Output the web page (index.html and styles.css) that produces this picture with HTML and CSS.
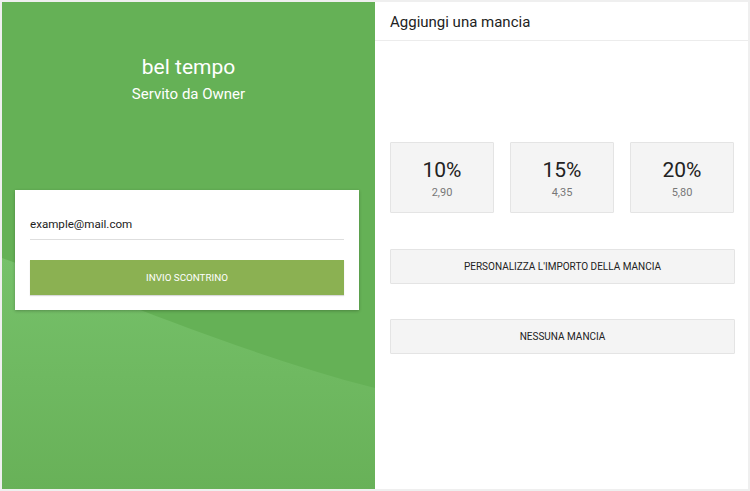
FILE: index.html
```html
<!DOCTYPE html>
<html>
<head>
<meta charset="utf-8">
<link rel="stylesheet" href="styles.css">
</head>
<body>
<div class="frame">
  <section class="left">
    <svg class="wave" viewBox="0 0 373 489" preserveAspectRatio="none" width="373" height="489">
      <defs>
        <linearGradient id="g" x1="0" y1="0" x2="0" y2="1">
          <stop offset="0" stop-color="#76c16a"/>
          <stop offset="1" stop-color="#68b158"/>
        </linearGradient>
      </defs>
      <path d="M0,256 C110,295 240,352 373,386 L373,489 L0,489 Z" fill="url(#g)"/>
    </svg>
    <div class="brand">
      <div class="name">bel tempo</div>
      <div class="served">Servito da Owner</div>
    </div>
    <div class="card">
      <div class="email">example@mail.com</div>
      <button class="send">INVIO SCONTRINO</button>
    </div>
  </section>
  <section class="right">
    <header class="head">Aggiungi una mancia</header>
    <div class="body">
      <div class="tips">
        <div class="tip"><div class="pct">10%</div><div class="amt">2,90</div></div>
        <div class="tip"><div class="pct">15%</div><div class="amt">4,35</div></div>
        <div class="tip"><div class="pct">20%</div><div class="amt">5,80</div></div>
      </div>
      <button class="wide custom">PERSONALIZZA L'IMPORTO DELLA MANCIA</button>
      <button class="wide none">NESSUNA MANCIA</button>
    </div>
  </section>
</div>
</body>
</html>
```

FILE: styles.css
```css
* { box-sizing: border-box; }
html, body { margin: 0; padding: 0; }
body {
  background: #efefef;
  font-family: Roboto, "Liberation Sans", Arial, sans-serif;
  width: 750px;
  height: 491px;
  overflow: hidden;
}
.frame {
  display: flex;
  padding: 2px;
  height: 491px;
}
.left {
  position: relative;
  width: 373px;
  height: 487px;
  background: #65b156;
  overflow: hidden;
  display: flex;
  flex-direction: column;
  align-items: center;
}
.wave {
  position: absolute;
  left: 0;
  top: 0;
}
.brand {
  position: relative;
  margin-top: 52px;
  text-align: center;
  color: #fff;
}
.name {
  font-size: 21px;
  line-height: 26px;
}
.served {
  margin-top: 4px;
  font-size: 15px;
  line-height: 20px;
}
.card {
  position: relative;
  margin-top: 86px;
  width: 344px;
  height: 120px;
  background: #fff;
  box-shadow: 0 1px 3px rgba(0,0,0,0.25);
  padding: 24px 15px 0 15px;
  align-self: flex-start;
  margin-left: 13px;
}
.email {
  font-size: 11.6px;
  color: #222;
  height: 26px;
  line-height: 20px;
  border-bottom: 1px solid #dedede;
}
.send {
  display: block;
  width: 100%;
  margin-top: 20px;
  height: 35px;
  border: none;
  background: #8bb152;
  color: #fff;
  font-family: inherit;
  font-size: 9.8px;
  box-shadow: 0 1px 1px rgba(0,0,0,0.15);
}
.right {
  width: 373px;
  height: 487px;
  background: #fff;
  display: flex;
  flex-direction: column;
}
.head {
  height: 39px;
  border-bottom: 1px solid #ececec;
  padding-left: 15px;
  font-size: 15px;
  line-height: 40px;
  color: #222;
}
.body {
  padding: 101px 13px 0 15px;
  display: flex;
  flex-direction: column;
}
.tips {
  display: flex;
  gap: 16px;
}
.tip {
  width: 104px;
  height: 71px;
  background: #f4f4f4;
  border: 1px solid #e4e4e4;
  border-radius: 1px;
  text-align: center;
  padding-top: 15px;
}
.pct {
  font-size: 21px;
  line-height: 24px;
  color: #222;
}
.amt {
  margin-top: 4px;
  font-size: 11px;
  line-height: 14px;
  color: #777;
}
.wide {
  display: block;
  width: 345px;
  height: 35px;
  background: #f4f4f4;
  border: 1px solid #e4e4e4;
  border-radius: 1px;
  font-family: inherit;
  font-size: 10px;
  color: #222;
  padding: 0;
}
.custom { margin-top: 36px; }
.none { margin-top: 35px; }
```
